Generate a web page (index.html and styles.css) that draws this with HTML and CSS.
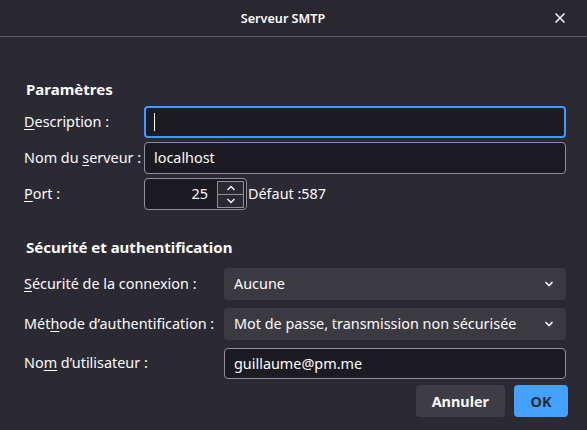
FILE: index.html
```html
<!DOCTYPE html>
<html lang="fr">
<head>
<meta charset="utf-8">
<title>Serveur SMTP</title>
<link rel="stylesheet" href="styles.css">
</head>
<body>
<div class="window">
  <header class="titlebar">
    <span class="title">Serveur SMTP</span>
    <svg class="close" width="12" height="12" viewBox="0 0 12 12"><path d="M1.5 1.5 L10.5 10.5 M10.5 1.5 L1.5 10.5" stroke="#f0f0f4" stroke-width="1.6" fill="none"/></svg>
  </header>
  <main class="content">
    <h2 class="heading first">Paramètres</h2>
    <div class="grid g1">
      <label class="label"><u>D</u>escription :</label>
      <div class="field focused"><span class="caret"></span></div>
      <label class="label">Nom du <u>s</u>erveur :</label>
      <div class="field"><span class="value">localhost</span></div>
      <label class="label"><u>P</u>ort :</label>
      <div class="portrow">
        <div class="field port">
          <span class="value num">25</span>
          <div class="spin">
            <span class="spinbtn"><svg width="10" height="6" viewBox="0 0 10 6"><path d="M1.5 5 L5 1.5 L8.5 5" stroke="#fbfbfe" stroke-width="1.4" fill="none"/></svg></span>
            <span class="spinbtn"><svg width="10" height="6" viewBox="0 0 10 6"><path d="M1.5 1 L5 4.5 L8.5 1" stroke="#fbfbfe" stroke-width="1.4" fill="none"/></svg></span>
          </div>
        </div>
        <span class="default">Défaut :587</span>
      </div>
    </div>
    <h2 class="heading second">Sécurité et authentification</h2>
    <div class="grid g2">
      <label class="label"><u>S</u>écurité de la connexion :</label>
      <div class="select"><span class="value">Aucune</span><svg class="chev" width="10" height="6" viewBox="0 0 10 6"><path d="M1.5 1 L5 4.5 L8.5 1" stroke="#fbfbfe" stroke-width="1.6" fill="none"/></svg></div>
      <label class="label">Mét<u>h</u>ode d’authentification :</label>
      <div class="select"><span class="value">Mot de passe, transmission non sécurisée</span><svg class="chev" width="10" height="6" viewBox="0 0 10 6"><path d="M1.5 1 L5 4.5 L8.5 1" stroke="#fbfbfe" stroke-width="1.6" fill="none"/></svg></div>
      <label class="label">No<u>m</u> d’utilisateur :</label>
      <div class="field"><span class="value">guillaume@pm.me</span></div>
    </div>
    <div class="buttons">
      <button class="btn">Annuler</button>
      <button class="btn primary">OK</button>
    </div>
  </main>
</div>
</body>
</html>
```

FILE: styles.css
```css
html, body {
  margin: 0;
  padding: 0;
  background: #2b2a33;
}
body {
  font-family: "Noto Sans", "DejaVu Sans", sans-serif;
  color: #fbfbfe;
  font-size: 14.4px;
}
.window {
  width: 587px;
  height: 430px;
  overflow: hidden;
  display: flex;
  flex-direction: column;
}
.titlebar {
  height: 36px;
  flex: none;
  background: #29282f;
  border-bottom: 1px solid #5b5a61;
  display: flex;
  align-items: center;
  justify-content: center;
  padding-right: 21px;
  position: relative;
}
.title {
  font-size: 12.6px;
  font-weight: 600;
  color: #fbfbfe;
}
.close {
  position: absolute;
  right: 21px;
  top: 12px;
}
.content {
  padding: 0 21px 0 24px;
  display: flex;
  flex-direction: column;
}
.heading {
  margin: 0;
  font-size: 15px;
  font-weight: 700;
  line-height: 20px;
  padding-left: 2px;
}
.heading.first { margin-top: 42px; }
.heading.second { margin-top: 27px; }
.grid {
  display: grid;
  align-items: center;
  column-gap: 0;
}
.g1 {
  grid-template-columns: 120px 1fr;
  row-gap: 4px;
  margin-top: 7px;
}
.g2 {
  grid-template-columns: 200px 1fr;
  row-gap: 8px;
  margin-top: 11px;
}
.label {
  line-height: 20px;
  white-space: nowrap;
  margin-top: -1px;
}
.label u {
  text-decoration-thickness: 1px;
  text-underline-offset: 2px;
}
.field {
  height: 32px;
  box-sizing: border-box;
  border: 1px solid #8f8f9d;
  border-radius: 4px;
  background: #1c1b22;
  display: flex;
  align-items: center;
  padding: 0 9px;
}
.field.focused {
  border: 2px solid #3d9bff;
  padding-left: 8px;
}
.caret {
  width: 1px;
  height: 18px;
  background: #fbfbfe;
}
.value {
  line-height: 20px;
  white-space: nowrap;
}
.portrow {
  display: flex;
  align-items: center;
}
.field.port {
  width: 103px;
  padding: 0 2px 0 9px;
  flex: none;
}
.num {
  flex: 1;
  text-align: right;
  padding-right: 9px;
}
.spin {
  display: flex;
  flex-direction: column;
  width: 27px;
  height: 27px;
  border: 1px solid #8f8f9d;
  box-sizing: border-box;
}
.spinbtn {
  flex: 1;
  display: flex;
  align-items: center;
  justify-content: center;
  background: #2b2a33;
}
.spinbtn + .spinbtn {
  border-top: 1px solid #8f8f9d;
}
.default {
  margin-left: 1px;
  line-height: 20px;
}
.select {
  height: 32px;
  box-sizing: border-box;
  background: #3b3a41;
  border-radius: 4px;
  display: flex;
  align-items: center;
  justify-content: space-between;
  padding: 0 12px 0 10px;
}
.g2 .field {
  height: 31px;
}
.buttons {
  display: flex;
  justify-content: flex-end;
  gap: 9px;
  margin-top: 6px;
  margin-right: -2px;
}
.btn {
  height: 32px;
  border: none;
  border-radius: 4px;
  font-family: "Noto Sans", "DejaVu Sans", sans-serif;
  font-size: 14.4px;
  font-weight: 700;
  color: #fbfbfe;
  background: #3e3d45;
  padding: 0 16px;
  min-width: 89px;
}
.btn.primary {
  background: #45a1ff;
  color: #2b2a33;
  min-width: 54px;
}
```
